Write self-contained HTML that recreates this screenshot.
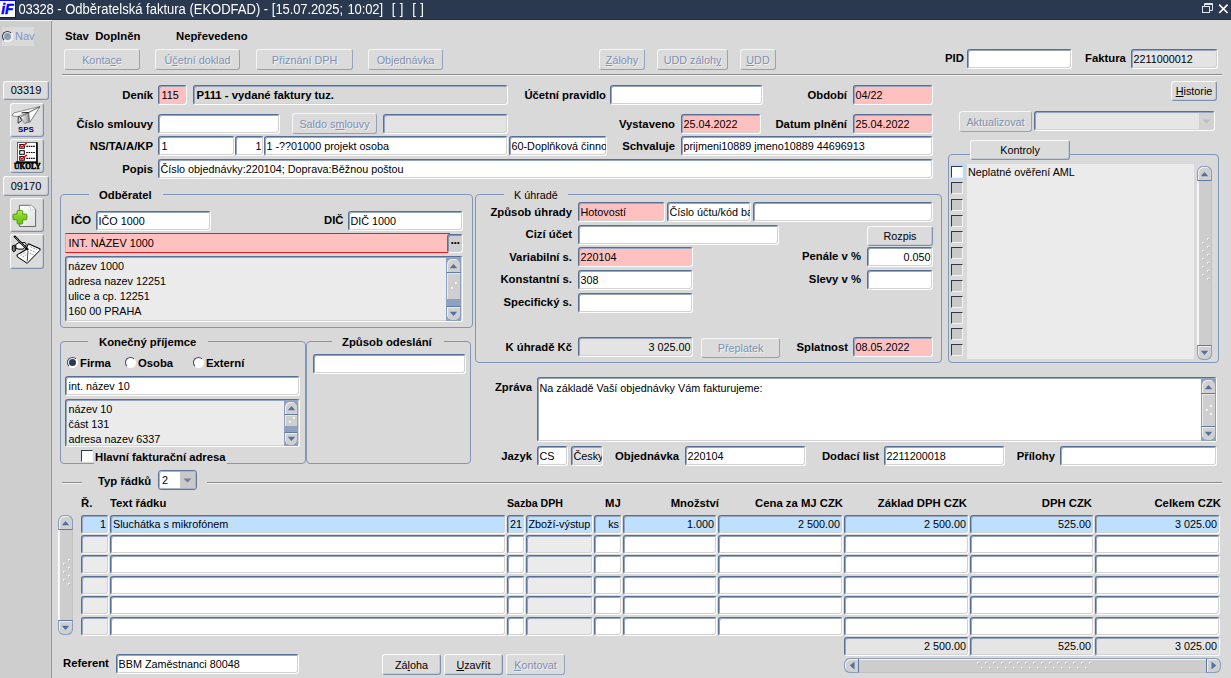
<!DOCTYPE html>
<html lang="cs"><head><meta charset="utf-8"><title>03328 - Odběratelská faktura</title>
<style>
*{box-sizing:border-box}
html,body{margin:0;padding:0}
body{width:1231px;height:678px;overflow:hidden;position:relative;background:#d9d9d9;font-family:"Liberation Sans",sans-serif;font-size:10.8px;color:#000}
#tb{position:absolute;left:0;top:0;width:1231px;height:19px;background:#2a3950}
#tb2{position:absolute;left:0;top:19px;width:1231px;height:1px;background:#232f42}
#tb3{position:absolute;left:0;top:20px;width:52px;height:1px;background:#f4f4f4}
#tbicon{position:absolute;left:0;top:0;width:16px;height:18px}
#tt{position:absolute;left:18.6px;top:1.2px;color:#fff;font-size:13px;line-height:17px;white-space:pre;word-spacing:0px;transform-origin:0 13px;transform:scaleY(1.11)}
.dg{letter-spacing:-0.23px}
.dg2{letter-spacing:-0.1px}
.tail{word-spacing:0.75px}
#side{position:absolute;left:0;top:21px;width:52px;height:657px;background:#cecece;border-right:1px solid #8c9bb5}
#navbox{position:absolute;left:2px;top:27px;width:32px;height:19px;background:#dadada}
.f{position:absolute;border:1px solid;border-color:#586f95 #fdfdfd #fdfdfd #586f95;border-radius:3px;box-shadow:inset 1px 1px 0 #95a6c3, inset -1px -1px 0 #d2d2d2;font-size:10.8px;line-height:18px;white-space:nowrap;overflow:hidden}
.f.r19{line-height:17px}
.f.ta{line-height:15px;white-space:normal}
.f.ta span{margin-top:2px}
.f.red{border-color:#f01818;border-left-color:#f4a0a0;border-radius:0;box-shadow:none;line-height:18px}
.f.dd{border-color:#62769a;box-shadow:inset 1px 1px 0 #aab5c9, inset -1px -1px 0 #aab5c9}
.l{position:absolute;font-weight:bold;font-size:11.3px;line-height:13px;white-space:nowrap}
.gl{position:absolute;background:#d9d9d9}
.b{position:absolute;border:1px solid;border-color:#fbfbfb #7f90ad #7f90ad #fbfbfb;border-radius:3px;background:#dbdbdb;box-shadow:inset -1px -1px 0 #c6cad2;text-align:center;font-size:10.8px;white-space:nowrap;color:#000}
.b.d{color:#7f90b2;text-shadow:1px 1px 0 #f0f0f0;border-color:#f6f6f6 #93a3be #93a3be #f6f6f6;background:#dbdbdb;box-shadow:none}
.g{position:absolute;border:1px solid #8196b8;border-radius:4px}
.hl{position:absolute;height:2px;border-top:1px solid #8e8e8e;border-bottom:1px solid #f6f6f6}
.radio{position:absolute;width:11px;height:11px;border-radius:50%;border:1px solid;border-color:#3a4458 #fff #fff #3a4458;background:#fff;transform:rotate(0deg)}
.radio.on::after{content:"";position:absolute;left:1px;top:1px;width:7px;height:7px;border-radius:50%;background:#2a3a55}
.radio.dis{background:#e8e8e8;border-color:#2e3748 #fafafa #fafafa #2e3748}
.radio.dis::after{content:"";position:absolute;left:1px;top:1px;width:7px;height:7px;border-radius:50%;background:#8d9cb6}
.cb{position:absolute;width:12px;height:12px;border:1px solid;border-color:#2e3849 #f4f4f4 #f4f4f4 #2e3849;background:#c9c9c9}
.cb.on{background:#fff}
.cb.w{background:#fff}
.vs{position:absolute;background:#8fa1c0;border:1px solid #8fa1c0}
.vs.full{background:#cdcdcd;border-color:#cdcdcd #c2c2c2 #cdcdcd #fbfbfb;border-radius:6px;box-shadow:inset 1px 0 0 #f2f2f2}
.hs{position:absolute;background:#cdcdcd;border:1px solid;border-color:#8fa1c0 #cdcdcd #c2c2c2 #cdcdcd;border-radius:6px;box-shadow:inset 0 1px 0 #f6f6f6}
.sb{position:absolute;background:#d0d0d0;border:1px solid #889dc0;box-shadow:inset 1px 1px 0 #efefef;display:flex;align-items:center;justify-content:center}
.sb.up{left:-1px;top:-1px;right:-1px;height:15px;border-radius:6px 6px 0 0;border-bottom-color:#5f79a4}
.sb.dn{left:-1px;bottom:-1px;right:-1px;height:15px;border-radius:0 0 6px 6px;border-top-color:#5f79a4}
.sb.lf{left:-1px;top:-1px;bottom:-1px;width:15px;border-radius:6px 0 0 6px;border-right-color:#5f79a4}
.sb.rt{right:-1px;top:-1px;bottom:-1px;width:15px;border-radius:0 6px 6px 0;border-left-color:#5f79a4}
.thumb,.thumb2{position:absolute;left:0;right:0;background:#cfcfcf;box-shadow:inset 1px 1px 0 #e9e9e9}
.thumb2{background:#8fa1c0;box-shadow:none}
.ddb{position:absolute;background:#dedede;border:1px solid;border-color:#fbfbfb #8c99b0 #8c99b0 #fbfbfb;display:flex;align-items:center;justify-content:center}
.ddb.flat{background:#d2d2d2;border:0}
.ddb.flat2{background:#c9c9c9;border:0}
u{text-decoration:underline}
</style></head>
<body>
<div id="tb"></div><div id="tb2"></div><div id="tb3"></div>
<div id="tbicon"><svg width="16" height="18" viewBox="0 0 16 18"><rect x="0" y="0" width="16" height="18" fill="#0000ff"/><rect x="0" y="1" width="15" height="16" fill="#fbfbf2"/><text x="1.2" y="13.6" font-family="Liberation Sans" font-style="italic" font-weight="bold" font-size="14.6" fill="#0000ff" stroke="#0000ff" stroke-width="0.4" textLength="12.5" lengthAdjust="spacingAndGlyphs">iF</text></svg></div>
<div id="tt"><span class="dg">03328</span> - Odběratelská faktura (EKODFAD) - <span class="tail">[<span class="dg2">15.07.2025</span>; <span class="dg2">10:02</span>]  [ ]  [ ]</span></div>
<svg id="wc" width="32" height="16" viewBox="0 0 32 16" style="position:absolute;left:1199px;top:1px"><rect x="3.5" y="5.5" width="7" height="6" fill="none" stroke="#dfe6f2" stroke-width="1"/><path d="M5.5 5 V2.5 H13.5 V9.5 H11" fill="none" stroke="#dfe6f2" stroke-width="1"/><path d="M5.5 3.5 H13.5" stroke="#dfe6f2" stroke-width="1"/><path d="M20.2 3.6 L28.6 12 M28.6 3.6 L20.2 12" stroke="#fff" stroke-width="1.6"/></svg>
<div id="side"></div>
<div id="navbox"></div>
<div class="radio dis" style="left:2px;top:31px"></div>
<div class="l" style="top:30px;left:15px;font-weight:normal;font-size:10.8px;color:#7f98c6;font-size:11px;">Nav</div>
<div class="b" style="left:3px;top:81px;width:46px;height:19px;line-height:18px;font-size:11px;line-height:17px;">03319</div>
<div class="b" style="left:10px;top:103px;width:34px;height:34px;line-height:33px;background:#dcdcdc;"></div>
<div class="b" style="left:10px;top:139px;width:34px;height:34px;line-height:33px;background:#dcdcdc;"></div>
<div class="b" style="left:3px;top:176px;width:46px;height:20px;line-height:19px;font-size:11px;line-height:19px;">09170</div>
<div class="b" style="left:10px;top:198px;width:34px;height:34px;line-height:33px;background:#dcdcdc;"></div>
<div class="b" style="left:10px;top:234px;width:34px;height:35px;line-height:34px;background:#dcdcdc;"></div>
<svg style="position:absolute;left:10px;top:103px" width="34" height="34" viewBox="0 0 34 34">
<defs><linearGradient id="kg" x1="0" y1="0" x2="1" y2="0"><stop offset="0" stop-color="#fff"/><stop offset="1" stop-color="#9a9a9a"/></linearGradient></defs>
<path d="M2.1 12 L3.9 9.9 L29.9 3.5 L18.6 9.6 L8 13.5 L2.1 12.9 Z" fill="#fafafa" stroke="#6a6a6a" stroke-width="0.7"/>
<path d="M18.6 9.7 L29.9 3.8 L19.8 19.4 Z" fill="#fefefe" stroke="#4a4a4a" stroke-width="0.7"/>
<path d="M18.6 9.7 L18.6 19.4 L14.5 20.3 L10.7 14.1 Z" fill="url(#kg)" stroke="#555" stroke-width="0.6"/>
<path d="M11.6 9.9 L18.6 9.5" stroke="#111" stroke-width="1"/>
<path d="M8.3 13.5 L8 20.3 L11.6 17.6 L10.1 14.1 Z" fill="#d8d8d8" stroke="#222" stroke-width="0.9"/>
<text x="15.9" y="28.9" text-anchor="middle" font-family="Liberation Sans" font-weight="bold" font-size="7.9" fill="#00007c">SPS</text></svg>
<svg style="position:absolute;left:10px;top:139px" width="34" height="34" viewBox="0 0 34 34">
<rect x="7.5" y="3.5" width="19" height="19.5" fill="#fff" stroke="#444" stroke-width="0.8"/>
<path d="M27 3.2 V24 M6 23.4 H27.8 M6.4 23 V25" stroke="#000" stroke-width="1.6"/>
<rect x="9.7" y="5.6" width="4.6" height="3.6" fill="#fff" stroke="#000" stroke-width="1"/>
<rect x="9.7" y="11.7" width="4.6" height="3.6" fill="#fff" stroke="#000" stroke-width="1"/>
<rect x="9.7" y="17.6" width="4.6" height="3.6" fill="#fff" stroke="#000" stroke-width="1"/>
<path d="M9.2 5.7 L11.9 8 L16.9 3.9 M9.2 17.7 L11.9 20 L16.9 15.9" stroke="#ee1010" stroke-width="1.5" fill="none"/>
<path d="M16.3 7.4 H24.9 M16.3 13.5 H24.9 M16.3 19.4 H24.9" stroke="#000" stroke-width="1.1" stroke-dasharray="1.6 0.7"/>
<text x="17.3" y="30" text-anchor="middle" font-family="Liberation Serif" font-weight="bold" font-size="7.2" fill="#000" stroke="#000" stroke-width="0.55" textLength="26.4" lengthAdjust="spacingAndGlyphs">ÚKOLY</text></svg>
<svg style="position:absolute;left:10px;top:198px" width="34" height="34" viewBox="0 0 34 34">
<defs><linearGradient id="dg" x1="0" y1="0" x2="1" y2="1"><stop offset="0" stop-color="#ffffff"/><stop offset="1" stop-color="#dedede"/></linearGradient>
<linearGradient id="pg" x1="0" y1="0" x2="0" y2="1"><stop offset="0" stop-color="#b4ea58"/><stop offset="0.45" stop-color="#84d020"/><stop offset="1" stop-color="#6cc418"/></linearGradient></defs>
<path d="M9.4 7.3 H21.6 L25.6 11.3 V28.5 H9.4 Z" fill="url(#dg)" stroke="#5a5a5a" stroke-width="0.9"/>
<path d="M19.2 7.8 C20.6 9.6 20.8 11.4 20.4 12.6 C22.2 11.6 24 11.4 25.3 11.6 L21.6 7.6 Z" fill="#f4f4f4" stroke="#b8b8b8" stroke-width="0.5"/>
<path d="M8.1 12.5 H11.7 Q12.7 12.5 12.7 13.5 V16.1 H15.9 Q16.9 16.1 16.9 17.1 V20.8 Q16.9 21.8 15.9 21.8 H12.7 V25 Q12.7 26 11.7 26 H8.1 Q7.1 26 7.1 25 V21.8 H4 Q3 21.8 3 20.8 V17.1 Q3 16.1 4 16.1 H7.1 V13.5 Q7.1 12.5 8.1 12.5 Z" fill="url(#pg)" stroke="#4c9a0c" stroke-width="1"/></svg>
<svg style="position:absolute;left:10px;top:234px" width="34" height="35" viewBox="0 0 34 35">
<path d="M7.1 21 L15.7 15.7 L18.4 9.8 L29.9 14.8 L17.2 27.6 Z" fill="#fbfbfb" stroke="#000" stroke-width="1.1" stroke-linejoin="round"/>
<path d="M7.1 21 L7.3 22.8 L17.2 29.3 L29.9 16.4 L29.9 14.8" fill="#fff" stroke="#000" stroke-width="1" stroke-linejoin="round"/>
<path d="M18 17 L17.2 27.4" stroke="#222" stroke-width="0.8"/>
<path d="M10.5 21.5 L16 18.2 M12.5 23 L16.6 20.6 M20 16 L26 18.4 M19.6 19 L24 21 M20.4 12.8 L27 15.6" stroke="#8a8a8a" stroke-width="0.8" stroke-dasharray="2 1"/>
<path d="M5.7 10.7 L8.3 8.9 L15.1 8.6 L16.3 10.7 L13.3 15.1 L8.9 15.1 L6 14.5 Z" fill="#fff" stroke="#000" stroke-width="1"/>
<path d="M2.4 11.9 L4.8 11 L5.6 16.6 L3.6 17.8 L2.3 15.7 Z" fill="#7c7c7c" stroke="#000" stroke-width="1"/>
<path d="M4.2 2.1 L18.1 16" stroke="#000" stroke-width="2.1"/>
<path d="M5.4 3.3 L16 13.9" stroke="#e8e8e8" stroke-width="0.55"/></svg>
<div class="l" style="top:30px;left:65px;">Stav&nbsp; Doplněn</div>
<div class="l" style="top:30px;left:176px;">Nepřevedeno</div>
<div class="b d" style="left:64px;top:49px;width:76px;height:21px;line-height:20px;">Konta<u>c</u>e</div>
<div class="b d" style="left:155px;top:49px;width:85px;height:21px;line-height:20px;">Ú<u>č</u>etní doklad</div>
<div class="b d" style="left:256px;top:49px;width:97px;height:21px;line-height:20px;">Přiznání DPH</div>
<div class="b d" style="left:368px;top:49px;width:75px;height:21px;line-height:20px;">Objednávka</div>
<div class="b d" style="left:599px;top:49px;width:46px;height:21px;line-height:20px;"><u>Z</u>álohy</div>
<div class="b d" style="left:657px;top:49px;width:71px;height:21px;line-height:20px;">UDD záloh<u>y</u></div>
<div class="b d" style="left:740px;top:49px;width:36px;height:21px;line-height:20px;"><u>U</u>DD</div>
<div class="l" style="top:52px;left:945px;">PID</div>
<div class="f " style="left:967px;top:49px;width:105px;height:20px;background:#fff;"><span style="padding:0 1.5px"></span></div>
<div class="l" style="top:52px;left:1085px;">Faktura</div>
<div class="f " style="left:1131px;top:49px;width:87px;height:20px;background:#e4e4e4;"><span style="padding:0 1.5px">2211000012</span></div>
<div class="hl" style="left:62px;top:74px;width:1160px"></div>
<div class="l" style="top:89px;right:1078px;">Deník</div>
<div class="f " style="left:158px;top:85px;width:29px;height:20px;background:#ffc0c0;"><span style="padding:0 2.5px">115</span></div>
<div class="f " style="left:193px;top:85px;width:315px;height:20px;background:#d9d9d9;font-weight:bold;font-size:11.3px;"><span style="padding:0 2.5px">P111 - vydané faktury tuz.</span></div>
<div class="l" style="top:89px;right:625px;">Účetní pravidlo</div>
<div class="f " style="left:610px;top:85px;width:153px;height:20px;background:#fff;"><span style="padding:0 1.5px"></span></div>
<div class="l" style="top:89px;right:384px;">Období</div>
<div class="f " style="left:853px;top:85px;width:80px;height:20px;background:#ffc0c0;"><span style="padding:0 1.5px">04/22</span></div>
<div class="b" style="left:1171px;top:81px;width:46px;height:20px;line-height:19px;"><u>H</u>istorie</div>
<div class="l" style="top:118px;right:1078px;">Číslo smlouvy</div>
<div class="f " style="left:158px;top:114px;width:122px;height:20px;background:#fff;"><span style="padding:0 1.5px"></span></div>
<div class="b d" style="left:292px;top:113px;width:85px;height:21px;line-height:20px;">Saldo s<u>m</u>louvy</div>
<div class="f " style="left:383px;top:114px;width:125px;height:20px;background:#e4e4e4;"><span style="padding:0 1.5px"></span></div>
<div class="l" style="top:118px;right:556px;">Vystaveno</div>
<div class="f " style="left:681px;top:114px;width:80px;height:20px;background:#ffc0c0;"><span style="padding:0 1.5px">25.04.2022</span></div>
<div class="l" style="top:118px;right:384px;">Datum plnění</div>
<div class="f " style="left:853px;top:114px;width:80px;height:20px;background:#ffc0c0;"><span style="padding:0 1.5px">25.04.2022</span></div>
<div class="b d" style="left:959px;top:111px;width:73px;height:21px;line-height:20px;">Aktualizovat</div>
<div class="f " style="left:1034px;top:111px;width:181px;height:20px;background:#e6e6e6;"><span style="padding:0 1.5px"></span></div>
<div class="ddb flat" style="left:1199px;top:113px;width:14px;height:16px"><svg width="9" height="5" viewBox="0 0 9 5"><path d="M0.5 0.5 L4.5 4.5 L8.5 0.5 Z" fill="#b8bcc4"/></svg></div>
<div class="l" style="top:140px;right:1078px;">NS/TA/A/KP</div>
<div class="f " style="left:158px;top:136px;width:77px;height:20px;background:#fff;"><span style="padding:0 2.5px">1</span></div>
<div class="f " style="left:235px;top:136px;width:29px;height:20px;background:#fff;text-align:right;"><span style="padding:0 1.5px">1</span></div>
<div class="f " style="left:264px;top:136px;width:244px;height:20px;background:#fff;"><span style="padding:0 1.5px">1 -??01000 projekt osoba</span></div>
<div class="f clip" style="left:509px;top:136px;width:98px;height:20px;background:#fff;"><span style="padding:0 1.5px">60-Doplňková činnost</span></div>
<div class="l" style="top:140px;right:556px;">Schvaluje</div>
<div class="f " style="left:681px;top:136px;width:252px;height:20px;background:#fff;"><span style="padding:0 1.5px">prijmeni10889 jmeno10889 44696913</span></div>
<div class="l" style="top:163px;right:1078px;">Popis</div>
<div class="f " style="left:158px;top:159px;width:775px;height:20px;background:#fff;"><span style="padding:0 1.5px">Číslo objednávky:220104; Doprava:Běžnou poštou</span></div>
<div class="g" style="left:948px;top:154px;width:271px;height:209px"></div>
<div class="b" style="left:970px;top:140px;width:100px;height:20px;line-height:19px;">Kontroly</div>
<div style="position:absolute;left:967px;top:164px;width:227px;height:195px;background:#ebebeb"></div>
<div style="position:absolute;left:951px;top:164px;width:15px;height:16px;background:#b9d9ff"></div>
<div class="cb on" style="left:951px;top:166px"></div>
<div class="cb" style="left:951px;top:182px"></div>
<div class="cb" style="left:951px;top:199px"></div>
<div class="cb" style="left:951px;top:215px"></div>
<div class="cb" style="left:951px;top:231px"></div>
<div class="cb" style="left:951px;top:247px"></div>
<div class="cb" style="left:951px;top:264px"></div>
<div class="cb" style="left:951px;top:280px"></div>
<div class="cb" style="left:951px;top:296px"></div>
<div class="cb" style="left:951px;top:312px"></div>
<div class="cb" style="left:951px;top:328px"></div>
<div class="cb" style="left:951px;top:344px"></div>
<div class="l" style="top:166px;left:968px;font-weight:normal;font-size:10.8px;">Neplatné ověření AML</div>
<div class="vs full" style="left:1197px;top:166px;width:15px;height:194px"><div class="sb up"><svg width="9" height="6" viewBox="0 0 9 6"><path d="M0.8 5.3 L4.5 1 L8.2 5.3 Z" fill="#5370a0"/></svg></div><div class="sb dn"><svg width="9" height="6" viewBox="0 0 9 6"><path d="M0.8 0.7 L4.5 5 L8.2 0.7 Z" fill="#5370a0"/></svg></div><svg style="position:absolute;left:3px;top:71px" width="8" height="46" viewBox="0 0 8 46"><rect x="6" y="0" width="1.6" height="1.6" fill="#fdfdfd"/><rect x="7.2" y="1.2" width="1" height="1" fill="#a0a0a0"/><rect x="1" y="4" width="1.6" height="1.6" fill="#fdfdfd"/><rect x="2.2" y="5.2" width="1" height="1" fill="#a0a0a0"/><rect x="6" y="8" width="1.6" height="1.6" fill="#fdfdfd"/><rect x="7.2" y="9.2" width="1" height="1" fill="#a0a0a0"/><rect x="1" y="12" width="1.6" height="1.6" fill="#fdfdfd"/><rect x="2.2" y="13.2" width="1" height="1" fill="#a0a0a0"/><rect x="6" y="16" width="1.6" height="1.6" fill="#fdfdfd"/><rect x="7.2" y="17.2" width="1" height="1" fill="#a0a0a0"/><rect x="1" y="20" width="1.6" height="1.6" fill="#fdfdfd"/><rect x="2.2" y="21.2" width="1" height="1" fill="#a0a0a0"/><rect x="6" y="24" width="1.6" height="1.6" fill="#fdfdfd"/><rect x="7.2" y="25.2" width="1" height="1" fill="#a0a0a0"/><rect x="1" y="28" width="1.6" height="1.6" fill="#fdfdfd"/><rect x="2.2" y="29.2" width="1" height="1" fill="#a0a0a0"/><rect x="6" y="32" width="1.6" height="1.6" fill="#fdfdfd"/><rect x="7.2" y="33.2" width="1" height="1" fill="#a0a0a0"/><rect x="1" y="36" width="1.6" height="1.6" fill="#fdfdfd"/><rect x="2.2" y="37.2" width="1" height="1" fill="#a0a0a0"/><rect x="6" y="40" width="1.6" height="1.6" fill="#fdfdfd"/><rect x="7.2" y="41.2" width="1" height="1" fill="#a0a0a0"/></svg></div>
<div class="g" style="left:60px;top:194px;width:413px;height:134px"></div>
<div class="gl" style="left:89px;top:192px;width:74px;height:5px"></div>
<div class="l" style="left:99px;top:189px;">Odběratel</div>
<div class="l" style="top:214px;left:71px;">IČO</div>
<div class="f " style="left:96px;top:211px;width:115px;height:20px;background:#fff;"><span style="padding:0 1.5px">IČO 1000</span></div>
<div class="l" style="top:214px;left:324px;">DIČ</div>
<div class="f " style="left:348px;top:211px;width:115px;height:20px;background:#fff;"><span style="padding:0 1.5px">DIČ 1000</span></div>
<div class="f red" style="left:65px;top:233px;width:385px;height:20px;background:#ffc0c0"><span style="padding:0 2.5px">INT. NÁZEV 1000</span></div>
<div class="f" style="left:447px;top:234px;width:16px;height:19px;background:#cfcfcf;box-shadow:inset 1px 1px 0 #8093b3"><span style="position:absolute;left:2.5px;top:-4.2px;font-weight:bold;font-size:13px;letter-spacing:-0.62px;color:#1a0000">...</span></div>
<div class="f ta" style="left:65px;top:256px;width:398px;height:66px;background:#ebebeb"><span style="padding:0 2.2px;display:block">název 1000<br>adresa nazev 12251<br>ulice a cp. 12251<br>160 00 PRAHA</span></div>
<div class="vs" style="left:446px;top:258px;width:15px;height:63px"><div class="sb up"><svg width="9" height="6" viewBox="0 0 9 6"><path d="M0.8 5.3 L4.5 1 L8.2 5.3 Z" fill="#5370a0"/></svg></div><div class="sb dn"><svg width="9" height="6" viewBox="0 0 9 6"><path d="M0.8 0.7 L4.5 5 L8.2 0.7 Z" fill="#5370a0"/></svg></div><div class="thumb" style="top:14px;height:26px"><svg style="position:absolute;left:3px;top:9px" width="8" height="8" viewBox="0 0 8 8"><rect x="5" y="0" width="1.7" height="1.7" fill="#fff"/><rect x="1" y="5" width="1.7" height="1.7" fill="#fff"/></svg></div></div>
<div class="g" style="left:60px;top:341px;width:246px;height:123px"></div>
<div class="gl" style="left:88px;top:339px;width:120px;height:5px"></div>
<div class="l" style="left:99px;top:336px;">Konečný příjemce</div>
<div class="g" style="left:306px;top:341px;width:165px;height:123px"></div>
<div class="gl" style="left:332px;top:339px;width:112px;height:5px"></div>
<div class="l" style="left:342px;top:336px;">Způsob odeslání</div>
<div class="radio on" style="left:67px;top:357px"></div>
<div class="l" style="top:357px;left:80px;">Firma</div>
<div class="radio" style="left:125px;top:357px"></div>
<div class="l" style="top:357px;left:138px;">Osoba</div>
<div class="radio" style="left:193px;top:357px"></div>
<div class="l" style="top:357px;left:206px;">Externí</div>
<div class="f " style="left:65px;top:376px;width:235px;height:20px;background:#fff;"><span style="padding:0 2.5px">int. název 10</span></div>
<div class="f ta" style="left:65px;top:399px;width:235px;height:48px;background:#ebebeb"><span style="padding:0 2.5px;display:block">název 10<br>část 131<br>adresa nazev 6337</span></div>
<div class="vs" style="left:284px;top:401px;width:14px;height:45px"><div class="sb up" style="height:14px"><svg width="9" height="6" viewBox="0 0 9 6"><path d="M0.8 5.3 L4.5 1 L8.2 5.3 Z" fill="#5370a0"/></svg></div><div class="sb dn" style="height:14px"><svg width="9" height="6" viewBox="0 0 9 6"><path d="M0.8 0.7 L4.5 5 L8.2 0.7 Z" fill="#5370a0"/></svg></div><div class="thumb" style="top:13px;height:11px"><svg style="position:absolute;left:3px;top:2px" width="8" height="8" viewBox="0 0 8 8"><rect x="5" y="0" width="1.7" height="1.7" fill="#fff"/><rect x="1" y="4" width="1.7" height="1.7" fill="#fff"/></svg></div></div>
<div class="cb w" style="left:81px;top:450px"></div>
<div style="position:absolute;left:94px;top:451px;width:133px;height:14px;background:#d9d9d9"></div>
<div class="l" style="top:451px;left:95px;">Hlavní fakturační adresa</div>
<div class="f " style="left:313px;top:354px;width:153px;height:20px;background:#fff;"><span style="padding:0 1.5px"></span></div>
<div class="g" style="left:475px;top:194px;width:467px;height:169px"></div>
<div class="gl" style="left:504px;top:192px;width:64px;height:5px"></div>
<div class="l" style="left:514px;top:189px;font-weight:normal;font-size:10.8px;">K úhradě</div>
<div class="l" style="top:206px;right:659px;">Způsob úhrady</div>
<div class="f " style="left:578px;top:202px;width:87px;height:20px;background:#ffc0c0;"><span style="padding:0 1.5px">Hotovostí</span></div>
<div class="f clip" style="left:667px;top:202px;width:84px;height:20px;background:#fff;"><span style="padding:0 1.5px">Číslo účtu/kód banky</span></div>
<div class="f " style="left:753px;top:202px;width:180px;height:20px;background:#fff;"><span style="padding:0 1.5px"></span></div>
<div class="l" style="top:228px;right:659px;">Cizí účet</div>
<div class="f " style="left:578px;top:225px;width:201px;height:20px;background:#fff;"><span style="padding:0 1.5px"></span></div>
<div class="b" style="left:867px;top:226px;width:66px;height:20px;line-height:19px;">Rozpis</div>
<div class="l" style="top:251px;right:659px;">Variabilní s.</div>
<div class="f " style="left:578px;top:247px;width:115px;height:20px;background:#ffc0c0;"><span style="padding:0 1.5px">220104</span></div>
<div class="l" style="top:250px;right:370px;">Penále v %</div>
<div class="f " style="left:867px;top:247px;width:66px;height:20px;background:#fff;text-align:right;"><span style="padding:0 1.5px">0.050</span></div>
<div class="l" style="top:273px;right:659px;">Konstantní s.</div>
<div class="f " style="left:578px;top:270px;width:115px;height:20px;background:#fff;"><span style="padding:0 1.5px">308</span></div>
<div class="l" style="top:273px;right:370px;">Slevy v %</div>
<div class="f " style="left:867px;top:270px;width:66px;height:20px;background:#fff;"><span style="padding:0 1.5px"></span></div>
<div class="l" style="top:296px;right:659px;">Specifický s.</div>
<div class="f " style="left:578px;top:293px;width:115px;height:20px;background:#fff;"><span style="padding:0 1.5px"></span></div>
<div class="l" style="top:341px;right:659px;">K úhradě Kč</div>
<div class="f " style="left:578px;top:337px;width:115px;height:20px;background:#e4e4e4;text-align:right;"><span style="padding:0 1.5px">3 025.00</span></div>
<div class="b d" style="left:701px;top:338px;width:79px;height:20px;line-height:19px;">Přeplatek</div>
<div class="l" style="top:341px;right:383px;">Splatnost</div>
<div class="f " style="left:853px;top:337px;width:80px;height:20px;background:#ffc0c0;"><span style="padding:0 1.5px">08.05.2022</span></div>
<div class="l" style="top:381px;right:699px;">Zpráva</div>
<div class="f ta" style="left:537px;top:377px;width:680px;height:65px;background:#fff"><span style="padding:0 1.5px;display:block;margin-top:3px">Na základě Vaší objednávky Vám fakturujeme:</span></div>
<div class="vs" style="left:1201px;top:379px;width:15px;height:62px"><div class="sb up"><svg width="9" height="6" viewBox="0 0 9 6"><path d="M0.8 5.3 L4.5 1 L8.2 5.3 Z" fill="#5370a0"/></svg></div><div class="sb dn"><svg width="9" height="6" viewBox="0 0 9 6"><path d="M0.8 0.7 L4.5 5 L8.2 0.7 Z" fill="#5370a0"/></svg></div><div class="thumb" style="top:14px;height:32px"><svg style="position:absolute;left:3px;top:11px" width="8" height="10" viewBox="0 0 8 10"><rect x="5" y="0" width="1.7" height="1.7" fill="#fff"/><rect x="1" y="4" width="1.7" height="1.7" fill="#fff"/><rect x="5" y="8" width="1.7" height="1.7" fill="#fff"/></svg></div></div>
<div class="l" style="top:450px;right:699px;">Jazyk</div>
<div class="f " style="left:537px;top:446px;width:31px;height:20px;background:#fff;"><span style="padding:0 1.5px">CS</span></div>
<div class="f clip" style="left:571px;top:446px;width:32px;height:20px;background:#e4e4e4;"><span style="padding:0 1.5px">Česky</span></div>
<div class="l" style="top:450px;right:552px;">Objednávka</div>
<div class="f " style="left:685px;top:446px;width:121px;height:20px;background:#fff;"><span style="padding:0 1.5px">220104</span></div>
<div class="l" style="top:450px;right:352px;">Dodací list</div>
<div class="f " style="left:884px;top:446px;width:121px;height:20px;background:#fff;"><span style="padding:0 1.5px">2211200018</span></div>
<div class="l" style="top:450px;right:176px;">Přílohy</div>
<div class="f " style="left:1060px;top:446px;width:157px;height:20px;background:#fff;"><span style="padding:0 1.5px"></span></div>
<div class="hl" style="left:62px;top:482px;width:20px"></div>
<div class="hl" style="left:207px;top:482px;width:1015px"></div>
<div class="l" style="top:475px;left:98px;">Typ řádků</div>
<div class="f dd" style="left:158px;top:470px;width:39px;height:20px;background:#fff;"><span style="padding:0 3px">2</span></div>
<div class="ddb flat2" style="left:180px;top:472px;width:15px;height:16px"><svg width="9" height="5" viewBox="0 0 9 5"><path d="M0.5 0.5 L4.5 4.5 L8.5 0.5 Z" fill="#6f7f9c"/></svg></div>
<div class="l" style="top:497px;left:81px;">Ř.</div>
<div class="l" style="top:497px;left:110px;">Text řádku</div>
<div class="l" style="top:497px;left:507px;font-size:10.6px;">Sazba DPH</div>
<div class="l" style="top:497px;left:605px;">MJ</div>
<div class="l" style="top:497px;right:512px;">Množství</div>
<div class="l" style="top:497px;right:388px;">Cena za MJ CZK</div>
<div class="l" style="top:497px;right:264px;">Základ DPH CZK</div>
<div class="l" style="top:497px;right:139px;">DPH CZK</div>
<div class="l" style="top:497px;right:10px;">Celkem CZK</div>
<div class="f clip r19" style="left:81px;top:515px;width:28px;height:19px;background:#bfdfff;text-align:right;"><span style="padding:0 2px">1</span></div>
<div class="f clip r19" style="left:110px;top:515px;width:396px;height:19px;background:#bfdfff;"><span style="padding:0 2px">Sluchátka s mikrofónem</span></div>
<div class="f clip r19" style="left:507px;top:515px;width:18px;height:19px;background:#bfdfff;"><span style="padding:0 2px">21</span></div>
<div class="f clip r19" style="left:526px;top:515px;width:67px;height:19px;background:#bfdfff;"><span style="padding:0 1.5px">Zboží-výstup</span></div>
<div class="f clip r19" style="left:594px;top:515px;width:28px;height:19px;background:#bfdfff;text-align:right;"><span style="padding:0 2px">ks</span></div>
<div class="f clip r19" style="left:623px;top:515px;width:94px;height:19px;background:#bfdfff;text-align:right;"><span style="padding:0 2px">1.000</span></div>
<div class="f clip r19" style="left:718px;top:515px;width:125px;height:19px;background:#bfdfff;text-align:right;"><span style="padding:0 2px">2 500.00</span></div>
<div class="f clip r19" style="left:844px;top:515px;width:125px;height:19px;background:#bfdfff;text-align:right;"><span style="padding:0 2px">2 500.00</span></div>
<div class="f clip r19" style="left:970px;top:515px;width:124px;height:19px;background:#bfdfff;text-align:right;"><span style="padding:0 2px">525.00</span></div>
<div class="f clip r19" style="left:1095px;top:515px;width:125px;height:19px;background:#bfdfff;text-align:right;"><span style="padding:0 2px">3 025.00</span></div>
<div class="f clip r19" style="left:81px;top:535px;width:28px;height:19px;background:#ebebeb;text-align:right;"><span style="padding:0 2px"></span></div>
<div class="f clip r19" style="left:110px;top:535px;width:396px;height:19px;background:#fff;"><span style="padding:0 2px"></span></div>
<div class="f clip r19" style="left:507px;top:535px;width:18px;height:19px;background:#fff;"><span style="padding:0 2px"></span></div>
<div class="f clip r19" style="left:526px;top:535px;width:67px;height:19px;background:#ebebeb;"><span style="padding:0 1.5px"></span></div>
<div class="f clip r19" style="left:594px;top:535px;width:28px;height:19px;background:#fff;text-align:right;"><span style="padding:0 2px"></span></div>
<div class="f clip r19" style="left:623px;top:535px;width:94px;height:19px;background:#fff;text-align:right;"><span style="padding:0 2px"></span></div>
<div class="f clip r19" style="left:718px;top:535px;width:125px;height:19px;background:#fff;text-align:right;"><span style="padding:0 2px"></span></div>
<div class="f clip r19" style="left:844px;top:535px;width:125px;height:19px;background:#fff;text-align:right;"><span style="padding:0 2px"></span></div>
<div class="f clip r19" style="left:970px;top:535px;width:124px;height:19px;background:#fff;text-align:right;"><span style="padding:0 2px"></span></div>
<div class="f clip r19" style="left:1095px;top:535px;width:125px;height:19px;background:#fff;text-align:right;"><span style="padding:0 2px"></span></div>
<div class="f clip r19" style="left:81px;top:555px;width:28px;height:19px;background:#ebebeb;text-align:right;"><span style="padding:0 2px"></span></div>
<div class="f clip r19" style="left:110px;top:555px;width:396px;height:19px;background:#fff;"><span style="padding:0 2px"></span></div>
<div class="f clip r19" style="left:507px;top:555px;width:18px;height:19px;background:#fff;"><span style="padding:0 2px"></span></div>
<div class="f clip r19" style="left:526px;top:555px;width:67px;height:19px;background:#ebebeb;"><span style="padding:0 1.5px"></span></div>
<div class="f clip r19" style="left:594px;top:555px;width:28px;height:19px;background:#fff;text-align:right;"><span style="padding:0 2px"></span></div>
<div class="f clip r19" style="left:623px;top:555px;width:94px;height:19px;background:#fff;text-align:right;"><span style="padding:0 2px"></span></div>
<div class="f clip r19" style="left:718px;top:555px;width:125px;height:19px;background:#fff;text-align:right;"><span style="padding:0 2px"></span></div>
<div class="f clip r19" style="left:844px;top:555px;width:125px;height:19px;background:#fff;text-align:right;"><span style="padding:0 2px"></span></div>
<div class="f clip r19" style="left:970px;top:555px;width:124px;height:19px;background:#fff;text-align:right;"><span style="padding:0 2px"></span></div>
<div class="f clip r19" style="left:1095px;top:555px;width:125px;height:19px;background:#fff;text-align:right;"><span style="padding:0 2px"></span></div>
<div class="f clip r19" style="left:81px;top:576px;width:28px;height:19px;background:#ebebeb;text-align:right;"><span style="padding:0 2px"></span></div>
<div class="f clip r19" style="left:110px;top:576px;width:396px;height:19px;background:#fff;"><span style="padding:0 2px"></span></div>
<div class="f clip r19" style="left:507px;top:576px;width:18px;height:19px;background:#fff;"><span style="padding:0 2px"></span></div>
<div class="f clip r19" style="left:526px;top:576px;width:67px;height:19px;background:#ebebeb;"><span style="padding:0 1.5px"></span></div>
<div class="f clip r19" style="left:594px;top:576px;width:28px;height:19px;background:#fff;text-align:right;"><span style="padding:0 2px"></span></div>
<div class="f clip r19" style="left:623px;top:576px;width:94px;height:19px;background:#fff;text-align:right;"><span style="padding:0 2px"></span></div>
<div class="f clip r19" style="left:718px;top:576px;width:125px;height:19px;background:#fff;text-align:right;"><span style="padding:0 2px"></span></div>
<div class="f clip r19" style="left:844px;top:576px;width:125px;height:19px;background:#fff;text-align:right;"><span style="padding:0 2px"></span></div>
<div class="f clip r19" style="left:970px;top:576px;width:124px;height:19px;background:#fff;text-align:right;"><span style="padding:0 2px"></span></div>
<div class="f clip r19" style="left:1095px;top:576px;width:125px;height:19px;background:#fff;text-align:right;"><span style="padding:0 2px"></span></div>
<div class="f clip r19" style="left:81px;top:596px;width:28px;height:19px;background:#ebebeb;text-align:right;"><span style="padding:0 2px"></span></div>
<div class="f clip r19" style="left:110px;top:596px;width:396px;height:19px;background:#fff;"><span style="padding:0 2px"></span></div>
<div class="f clip r19" style="left:507px;top:596px;width:18px;height:19px;background:#fff;"><span style="padding:0 2px"></span></div>
<div class="f clip r19" style="left:526px;top:596px;width:67px;height:19px;background:#ebebeb;"><span style="padding:0 1.5px"></span></div>
<div class="f clip r19" style="left:594px;top:596px;width:28px;height:19px;background:#fff;text-align:right;"><span style="padding:0 2px"></span></div>
<div class="f clip r19" style="left:623px;top:596px;width:94px;height:19px;background:#fff;text-align:right;"><span style="padding:0 2px"></span></div>
<div class="f clip r19" style="left:718px;top:596px;width:125px;height:19px;background:#fff;text-align:right;"><span style="padding:0 2px"></span></div>
<div class="f clip r19" style="left:844px;top:596px;width:125px;height:19px;background:#fff;text-align:right;"><span style="padding:0 2px"></span></div>
<div class="f clip r19" style="left:970px;top:596px;width:124px;height:19px;background:#fff;text-align:right;"><span style="padding:0 2px"></span></div>
<div class="f clip r19" style="left:1095px;top:596px;width:125px;height:19px;background:#fff;text-align:right;"><span style="padding:0 2px"></span></div>
<div class="f clip r19" style="left:81px;top:617px;width:28px;height:19px;background:#ebebeb;text-align:right;"><span style="padding:0 2px"></span></div>
<div class="f clip r19" style="left:110px;top:617px;width:396px;height:19px;background:#fff;"><span style="padding:0 2px"></span></div>
<div class="f clip r19" style="left:507px;top:617px;width:18px;height:19px;background:#fff;"><span style="padding:0 2px"></span></div>
<div class="f clip r19" style="left:526px;top:617px;width:67px;height:19px;background:#ebebeb;"><span style="padding:0 1.5px"></span></div>
<div class="f clip r19" style="left:594px;top:617px;width:28px;height:19px;background:#fff;text-align:right;"><span style="padding:0 2px"></span></div>
<div class="f clip r19" style="left:623px;top:617px;width:94px;height:19px;background:#fff;text-align:right;"><span style="padding:0 2px"></span></div>
<div class="f clip r19" style="left:718px;top:617px;width:125px;height:19px;background:#fff;text-align:right;"><span style="padding:0 2px"></span></div>
<div class="f clip r19" style="left:844px;top:617px;width:125px;height:19px;background:#fff;text-align:right;"><span style="padding:0 2px"></span></div>
<div class="f clip r19" style="left:970px;top:617px;width:124px;height:19px;background:#fff;text-align:right;"><span style="padding:0 2px"></span></div>
<div class="f clip r19" style="left:1095px;top:617px;width:125px;height:19px;background:#fff;text-align:right;"><span style="padding:0 2px"></span></div>
<div class="vs full" style="left:58px;top:515px;width:15px;height:120px"><div class="sb up"><svg width="9" height="6" viewBox="0 0 9 6"><path d="M0.8 5.3 L4.5 1 L8.2 5.3 Z" fill="#5370a0"/></svg></div><div class="sb dn"><svg width="9" height="6" viewBox="0 0 9 6"><path d="M0.8 0.7 L4.5 5 L8.2 0.7 Z" fill="#5370a0"/></svg></div><svg style="position:absolute;left:3px;top:43px" width="8" height="30" viewBox="0 0 8 30"><rect x="6" y="0" width="1.6" height="1.6" fill="#fdfdfd"/><rect x="7.2" y="1.2" width="1" height="1" fill="#a0a0a0"/><rect x="1" y="4" width="1.6" height="1.6" fill="#fdfdfd"/><rect x="2.2" y="5.2" width="1" height="1" fill="#a0a0a0"/><rect x="6" y="8" width="1.6" height="1.6" fill="#fdfdfd"/><rect x="7.2" y="9.2" width="1" height="1" fill="#a0a0a0"/><rect x="1" y="12" width="1.6" height="1.6" fill="#fdfdfd"/><rect x="2.2" y="13.2" width="1" height="1" fill="#a0a0a0"/><rect x="6" y="16" width="1.6" height="1.6" fill="#fdfdfd"/><rect x="7.2" y="17.2" width="1" height="1" fill="#a0a0a0"/><rect x="1" y="20" width="1.6" height="1.6" fill="#fdfdfd"/><rect x="2.2" y="21.2" width="1" height="1" fill="#a0a0a0"/><rect x="6" y="24" width="1.6" height="1.6" fill="#fdfdfd"/><rect x="7.2" y="25.2" width="1" height="1" fill="#a0a0a0"/></svg></div>
<div class="f r19" style="left:844px;top:637px;width:125px;height:19px;background:#e5e5e5;text-align:right;"><span style="padding:0 2px">2 500.00</span></div>
<div class="f r19" style="left:970px;top:637px;width:124px;height:19px;background:#e5e5e5;text-align:right;"><span style="padding:0 2px">525.00</span></div>
<div class="f r19" style="left:1095px;top:637px;width:125px;height:19px;background:#e5e5e5;text-align:right;"><span style="padding:0 2px">3 025.00</span></div>
<div class="hs" style="left:844px;top:658px;width:377px;height:15px"><div class="sb lf"><svg width="6" height="9" viewBox="0 0 6 9"><path d="M5.5 0.5 L0.8 4.5 L5.5 8.5 Z" fill="#5370a0"/></svg></div><div class="sb rt"><svg width="6" height="9" viewBox="0 0 6 9"><path d="M0.5 0.5 L5.2 4.5 L0.5 8.5 Z" fill="#5370a0"/></svg></div><svg style="position:absolute;left:132px;top:3px" width="118" height="9" viewBox="0 0 118 9"><rect x="0" y="0" width="1.6" height="1.6" fill="#fdfdfd"/><rect x="1.2" y="1.2" width="1" height="1" fill="#a0a0a0"/><rect x="4" y="5" width="1.6" height="1.6" fill="#fdfdfd"/><rect x="5.2" y="6.2" width="1" height="1" fill="#a0a0a0"/><rect x="8" y="0" width="1.6" height="1.6" fill="#fdfdfd"/><rect x="9.2" y="1.2" width="1" height="1" fill="#a0a0a0"/><rect x="12" y="5" width="1.6" height="1.6" fill="#fdfdfd"/><rect x="13.2" y="6.2" width="1" height="1" fill="#a0a0a0"/><rect x="16" y="0" width="1.6" height="1.6" fill="#fdfdfd"/><rect x="17.2" y="1.2" width="1" height="1" fill="#a0a0a0"/><rect x="20" y="5" width="1.6" height="1.6" fill="#fdfdfd"/><rect x="21.2" y="6.2" width="1" height="1" fill="#a0a0a0"/><rect x="24" y="0" width="1.6" height="1.6" fill="#fdfdfd"/><rect x="25.2" y="1.2" width="1" height="1" fill="#a0a0a0"/><rect x="28" y="5" width="1.6" height="1.6" fill="#fdfdfd"/><rect x="29.2" y="6.2" width="1" height="1" fill="#a0a0a0"/><rect x="32" y="0" width="1.6" height="1.6" fill="#fdfdfd"/><rect x="33.2" y="1.2" width="1" height="1" fill="#a0a0a0"/><rect x="36" y="5" width="1.6" height="1.6" fill="#fdfdfd"/><rect x="37.2" y="6.2" width="1" height="1" fill="#a0a0a0"/><rect x="40" y="0" width="1.6" height="1.6" fill="#fdfdfd"/><rect x="41.2" y="1.2" width="1" height="1" fill="#a0a0a0"/><rect x="44" y="5" width="1.6" height="1.6" fill="#fdfdfd"/><rect x="45.2" y="6.2" width="1" height="1" fill="#a0a0a0"/><rect x="48" y="0" width="1.6" height="1.6" fill="#fdfdfd"/><rect x="49.2" y="1.2" width="1" height="1" fill="#a0a0a0"/><rect x="52" y="5" width="1.6" height="1.6" fill="#fdfdfd"/><rect x="53.2" y="6.2" width="1" height="1" fill="#a0a0a0"/><rect x="56" y="0" width="1.6" height="1.6" fill="#fdfdfd"/><rect x="57.2" y="1.2" width="1" height="1" fill="#a0a0a0"/><rect x="60" y="5" width="1.6" height="1.6" fill="#fdfdfd"/><rect x="61.2" y="6.2" width="1" height="1" fill="#a0a0a0"/><rect x="64" y="0" width="1.6" height="1.6" fill="#fdfdfd"/><rect x="65.2" y="1.2" width="1" height="1" fill="#a0a0a0"/><rect x="68" y="5" width="1.6" height="1.6" fill="#fdfdfd"/><rect x="69.2" y="6.2" width="1" height="1" fill="#a0a0a0"/><rect x="72" y="0" width="1.6" height="1.6" fill="#fdfdfd"/><rect x="73.2" y="1.2" width="1" height="1" fill="#a0a0a0"/><rect x="76" y="5" width="1.6" height="1.6" fill="#fdfdfd"/><rect x="77.2" y="6.2" width="1" height="1" fill="#a0a0a0"/><rect x="80" y="0" width="1.6" height="1.6" fill="#fdfdfd"/><rect x="81.2" y="1.2" width="1" height="1" fill="#a0a0a0"/><rect x="84" y="5" width="1.6" height="1.6" fill="#fdfdfd"/><rect x="85.2" y="6.2" width="1" height="1" fill="#a0a0a0"/><rect x="88" y="0" width="1.6" height="1.6" fill="#fdfdfd"/><rect x="89.2" y="1.2" width="1" height="1" fill="#a0a0a0"/><rect x="92" y="5" width="1.6" height="1.6" fill="#fdfdfd"/><rect x="93.2" y="6.2" width="1" height="1" fill="#a0a0a0"/><rect x="96" y="0" width="1.6" height="1.6" fill="#fdfdfd"/><rect x="97.2" y="1.2" width="1" height="1" fill="#a0a0a0"/><rect x="100" y="5" width="1.6" height="1.6" fill="#fdfdfd"/><rect x="101.2" y="6.2" width="1" height="1" fill="#a0a0a0"/><rect x="104" y="0" width="1.6" height="1.6" fill="#fdfdfd"/><rect x="105.2" y="1.2" width="1" height="1" fill="#a0a0a0"/><rect x="108" y="5" width="1.6" height="1.6" fill="#fdfdfd"/><rect x="109.2" y="6.2" width="1" height="1" fill="#a0a0a0"/><rect x="112" y="0" width="1.6" height="1.6" fill="#fdfdfd"/><rect x="113.2" y="1.2" width="1" height="1" fill="#a0a0a0"/></svg></div>
<div class="l" style="top:657px;left:63px;">Referent</div>
<div class="f " style="left:116px;top:654px;width:183px;height:20px;background:#fff;"><span style="padding:0 1.5px">BBM Zaměstnanci 80048</span></div>
<div class="b" style="left:382px;top:654px;width:59px;height:21px;line-height:20px;">Zá<u>l</u>oha</div>
<div class="b" style="left:444px;top:654px;width:59px;height:21px;line-height:20px;"><u>U</u>zavřít</div>
<div class="b d" style="left:506px;top:654px;width:59px;height:21px;line-height:20px;"><u>K</u>ontovat</div>
</body></html>
